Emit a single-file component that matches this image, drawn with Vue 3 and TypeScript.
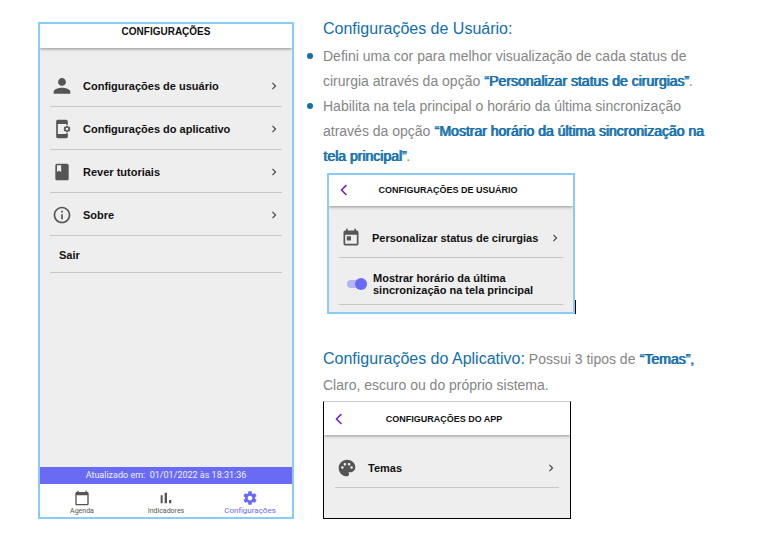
<script setup lang="ts">
import { ref } from 'vue'

interface MenuItem {
  label: string
  icon: string
}

const icons: Record<string, string> = {
  person: 'M12 11.800c2.600 0 4.700-2.100 4.700-4.700S14.600 2.400 12 2.400 7.300 4.500 7.300 7.100s2.100 4.700 4.700 4.700zm0 2.200c-3.300 0-10 1.600-10 4.900V21.400h20v-2.500c0-3.300-6.700-4.900-10-4.900z',
  book: 'M18 2H6c-1.100 0-2 .9-2 2v16c0 1.100.9 2 2 2h12c1.100 0 2-.9 2-2V4c0-1.100-.9-2-2-2zM6 4h5v8l-2.500-1.500L6 12V4z',
  info: 'M11 7h2v2h-2zm0 4h2v6h-2zm1-9C6.480 2 2 6.480 2 12s4.480 10 10 10 10-4.480 10-10S17.520 2 12 2zm0 18c-4.410 0-8-3.590-8-8s3.590-8 8-8 8 3.590 8 8-3.590 8-8 8z',
  today: 'M19 3h-1V1h-2v2H8V1H6v2H5c-1.110 0-2 .9-2 2v14c0 1.100.89 2 2 2h14c1.100 0 2-.9 2-2V5c0-1.100-.9-2-2-2zm0 16H5V8h14v11zM7 10h5v5H7z',
  calendar: 'M20 3h-1V1h-2v2H7V1H5v2H4c-1.100 0-2 .9-2 2v16c0 1.100.9 2 2 2h16c1.100 0 2-.9 2-2V5c0-1.100-.9-2-2-2zm0 18H4V8h16v13z',
  palette: 'M12 2C6.490 2 2 6.490 2 12s4.490 10 10 10c1.380 0 2.500-1.120 2.500-2.500 0-.61-.23-1.200-.64-1.670-.08-.1-.13-.21-.13-.33 0-.28.22-.5.5-.5H16c3.310 0 6-2.690 6-6 0-4.960-4.490-9-10-9zM6.500 13c-.83 0-1.500-.67-1.500-1.500S5.670 10 6.500 10 8 10.670 8 11.500 7.330 13 6.500 13zm3-4C8.670 9 8 8.330 8 7.500S8.670 6 9.500 6s1.500.67 1.500 1.500S10.330 9 9.500 9zm5 0c-.83 0-1.500-.67-1.500-1.500S13.670 6 14.500 6s1.500.67 1.500 1.500S15.330 9 14.500 9zm3 4c-.83 0-1.500-.67-1.500-1.500s.67-1.500 1.500-1.500 1.500.67 1.500 1.500-.67 1.500-1.500 1.500z',
  phone: 'M21.810 12.740l-.82-.63v-.22l.8-.63c.16-.12.2-.34.1-.51l-.85-1.480c-.07-.13-.21-.2-.35-.2-.05 0-.1.01-.15.03l-.95.38c-.08-.05-.11-.07-.19-.11l-.15-1.010c-.03-.21-.2-.36-.4-.36h-1.710c-.2 0-.37.15-.4.34l-.14 1.010c-.03.02-.07.03-.1.05l-.09.06-.95-.38c-.05-.02-.1-.03-.15-.03-.14 0-.27.07-.35.2l-.85 1.480c-.1.17-.06.39.1.51l.8.63v.23l-.8.63c-.16.12-.2.34-.1.51l.85 1.480c.07.13.21.2.35.2.05 0 .1-.01.15-.03l.95-.37c.08.05.12.07.2.11l.15 1.010c.03.2.2.34.4.34h1.710c.2 0 .37-.15.4-.34l.15-1.010c.03-.02.07-.03.1-.05l.09-.06.95.38c.05.02.1.03.15.03.14 0 .27-.07.35-.2l.85-1.480c.1-.17.06-.39-.1-.51zM18 13.500c-.83 0-1.500-.67-1.500-1.500s.67-1.500 1.500-1.500 1.500.67 1.500 1.500-.67 1.500-1.500 1.500zM17 18H7V6h10v1h2V3c0-1.100-.9-2-2-2H7c-1.100 0-2 .9-2 2v18c0 1.100.9 2 2 2h10c1.100 0 2-.9 2-2v-4h-2v1z',
  bars: 'M4 8h3v12H4zm12.500 7h3.500v5h-3.500zM10 4h3.500v16H10z',
  gear: 'M19.430 12.980c.04-.32.07-.64.07-.98s-.03-.66-.07-.98l2.110-1.650c.19-.15.24-.42.12-.64l-2-3.460c-.12-.22-.39-.3-.61-.22l-2.490 1c-.52-.4-1.080-.73-1.690-.98l-.38-2.650C14.460 2.180 14.250 2 14 2h-4c-.25 0-.46.18-.49.42l-.38 2.650c-.61.25-1.170.59-1.690.98l-2.490-1c-.23-.09-.49 0-.61.22l-2 3.460c-.13.22-.07.49.12.64l2.110 1.650c-.04.32-.07.65-.07.98s.03.66.07.98l-2.110 1.650c-.19.15-.24.42-.12.64l2 3.460c.12.22.39.3.61.22l2.490-1c.52.4 1.080.73 1.690.98l.38 2.650c.03.24.24.42.49.42h4c.25 0 .46-.18.49-.42l.38-2.650c.61-.25 1.170-.59 1.690-.98l2.490 1c.23.09.49 0 .61-.22l2-3.460c.12-.22.07-.49-.12-.64l-2.110-1.650zM12 15.500c-1.930 0-3.500-1.570-3.500-3.500s1.570-3.500 3.500-3.500 3.500 1.570 3.500 3.500-1.570 3.500-3.500 3.500z',
  chevron: 'M8.600 7.400L10 6l6 6-6 6-1.400-1.400L13.200 12z',
  back: 'M17 4.500L15.200 2.700 5.900 12l9.300 9.300 1.800-1.800L9.500 12z'
}

const menu: MenuItem[] = [
  { label: 'Configurações de usuário', icon: 'person' },
  { label: 'Configurações do aplicativo', icon: 'phone' },
  { label: 'Rever tutoriais', icon: 'book' },
  { label: 'Sobre', icon: 'info' }
]

const tabs: MenuItem[] = [
  { label: 'Agenda', icon: 'calendar' },
  { label: 'Indicadores', icon: 'bars' },
  { label: 'Configurações', icon: 'gear' }
]

const activeTab = ref('Configurações')
const showSync = ref(true)
</script>

<template>
  <main class="page">
    <section class="screen phone">
      <header class="bar">
        <h1 class="bar-title">CONFIGURAÇÕES</h1>
      </header>
      <nav class="list">
        <button v-for="item in menu" :key="item.label" type="button" class="row">
          <svg class="icon" viewBox="0 0 24 24"><path fill-rule="evenodd" :d="icons[item.icon]" /></svg>
          <span class="label">{{ item.label }}</span>
          <svg class="chevron" viewBox="0 0 24 24"><path :d="icons.chevron" /></svg>
        </button>
        <button type="button" class="row exit">Sair</button>
      </nav>
      <p class="updated">Atualizado em:&nbsp; 01/01/2022 às 18:31:36</p>
      <nav class="tabs">
        <button
          v-for="tab in tabs"
          :key="tab.label"
          type="button"
          class="tab"
          :class="{ active: tab.label === activeTab }"
          @click="activeTab = tab.label"
        >
          <svg class="tab-icon" viewBox="0 0 24 24"><path fill-rule="evenodd" :d="icons[tab.icon]" /></svg>
          <span>{{ tab.label }}</span>
        </button>
      </nav>
    </section>

    <article class="doc">
      <h2 class="heading">Configurações de Usuário:</h2>
      <ul class="points">
        <li>
          Defini uma cor para melhor visualização de cada status de cirurgia através da opção
          <strong>“Personalizar status de cirurgias”</strong>.
        </li>
        <li>
          Habilita na tela principal o horário da última sincronização através da opção
          <strong>“Mostrar horário da última sincronização na tela principal”</strong>.
        </li>
      </ul>

      <div class="figure">
        <section class="screen card user">
          <header class="bar">
            <button type="button" class="back" aria-label="Voltar">
              <svg viewBox="0 0 24 24"><path :d="icons.back" /></svg>
            </button>
            <h3 class="bar-title">CONFIGURAÇÕES DE USUÁRIO</h3>
          </header>
          <div class="list">
            <button type="button" class="row">
              <svg class="icon" viewBox="0 0 24 24"><path fill-rule="evenodd" :d="icons.today" /></svg>
              <span class="label">Personalizar status de cirurgias</span>
              <svg class="chevron" viewBox="0 0 24 24"><path :d="icons.chevron" /></svg>
            </button>
            <label class="row toggle" for="sync">
              <input id="sync" v-model="showSync" type="checkbox" class="switch" />
              <span>Mostrar horário da última sincronização na tela principal</span>
            </label>
          </div>
        </section>
        <span class="caret"></span>
      </div>

      <div class="intro">
        <h2 class="heading">Configurações do Aplicativo:</h2>
        {{ ' ' }}
        <p>Possui 3 tipos de <strong>“Temas”,</strong> Claro, escuro ou do próprio sistema.</p>
      </div>

      <section class="screen card app">
        <header class="bar">
          <button type="button" class="back" aria-label="Voltar">
            <svg viewBox="0 0 24 24"><path :d="icons.back" /></svg>
          </button>
          <h3 class="bar-title">CONFIGURAÇÕES DO APP</h3>
        </header>
        <div class="list">
          <button type="button" class="row">
            <svg class="icon" viewBox="0 0 24 24"><path fill-rule="evenodd" :d="icons.palette" /></svg>
            <span class="label">Temas</span>
            <svg class="chevron" viewBox="0 0 24 24"><path :d="icons.chevron" /></svg>
          </button>
        </div>
      </section>
    </article>
  </main>
</template>

<style>
body {
  margin: 0;
  background: #fff;
}
</style>

<style scoped>
.page {
  display: grid;
  grid-template-columns: minmax(0, 256fr) minmax(0, 400fr);
  gap: 29px;
  padding: 16px 50px 20px 38px;
  font-family: "Liberation Sans", Arial, sans-serif;
}

h1, h2, h3, p, ul {
  margin: 0;
  padding: 0;
}

button {
  margin: 0;
  padding: 0;
  border: 0;
  background: none;
  font: inherit;
  color: inherit;
  cursor: pointer;
}

svg {
  display: block;
  flex: none;
  fill: currentColor;
}

.screen {
  display: flex;
  flex-direction: column;
  box-sizing: border-box;
  overflow: hidden;
  border: 2px solid #8accf9;
  background: #eee;
  color: #111;
}

.phone {
  margin-top: 6px;
}

.bar {
  display: flex;
  align-items: center;
  background: #fff;
  box-shadow: 0 1px 3px rgba(0, 0, 0, 0.4);
}

.bar-title {
  flex: 1;
  font-size: 10px;
  line-height: 14px;
  font-weight: 700;
  text-align: center;
}

.phone .bar {
  padding: 1px 0 9px;
}

.list {
  flex: 1;
  padding: 16px 10px 0;
}

.row {
  display: flex;
  align-items: center;
  box-sizing: border-box;
  width: 100%;
  min-height: 43px;
  padding: 2px 1px 0 2px;
  border-bottom: 1px solid #c6c6c6;
  font-size: 11px;
  line-height: 12px;
  font-weight: 700;
  text-align: left;
}

.icon {
  width: 20px;
  height: 20px;
  margin-right: 11px;
  color: #555;
}

.label {
  flex: 1;
}

.chevron {
  width: 14px;
  height: 14px;
  color: #444;
}

.exit {
  min-height: 37px;
  padding-left: 9px;
}

.updated {
  background: #6a6bf5;
  color: #f0f0ff;
  font-family: Roboto, sans-serif;
  font-size: 9px;
  line-height: 17px;
  text-align: center;
}

.tabs {
  display: grid;
  grid-template-columns: repeat(3, 1fr);
  background: #fff;
}

.tab {
  display: flex;
  flex-direction: column;
  align-items: center;
  padding: 6px 0 1px;
  font-family: Roboto, sans-serif;
  font-size: 7px;
  line-height: 10px;
  color: #555;
}

.tab.active {
  font-size: 8px;
  color: #6a6bf5;
}

.tab-icon {
  width: 16px;
  height: 16px;
}

.doc {
  font-size: 14px;
  line-height: 25px;
  color: #858585;
}

.heading {
  font-size: 16px;
  line-height: 25px;
  font-weight: 400;
  color: #126fab;
}

.points {
  margin-top: 3px;
  list-style: none;
}

.points li::before {
  content: "";
  float: left;
  width: 6px;
  height: 6px;
  margin: 9px 0 0 -16px;
  border-radius: 50%;
  background: #126fab;
}

strong {
  font-weight: 400;
  color: #126fab;
  text-shadow: 1px 0 currentColor;
}

.figure {
  display: flex;
  align-items: flex-end;
  margin: 4px 0 32px 4px;
}

.card {
  width: 248px;
}

.card .bar {
  padding: 8px 28px 9px 8px;
}

.card .bar-title {
  font-size: 9px;
}

.card .list {
  padding: 13px 10px 7px;
}

.card .row {
  padding-top: 0;
}

.back svg {
  width: 14px;
  height: 14px;
  color: #7418d8;
}

.user .row {
  min-height: 39px;
}

.card .toggle {
  min-height: 47px;
  padding: 6px 20px 0 8px;
  cursor: pointer;
}

.switch {
  appearance: none;
  display: flex;
  align-items: center;
  flex: none;
  width: 20px;
  height: 8px;
  margin: 0 6px 0 0;
  border-radius: 4px;
  background: #b4b5f3;
  cursor: pointer;
}

.switch::before {
  content: "";
  width: 12px;
  height: 12px;
  border-radius: 50%;
  background: #888;
}

.switch:checked {
  justify-content: flex-end;
}

.switch:checked::before {
  background: #6a6bf5;
}

.caret {
  width: 1px;
  height: 14px;
  background: #000;
}

.intro {
  margin-bottom: 3px;
  line-height: 26px;
}

.intro .heading,
.intro p {
  display: inline;
  line-height: 26px;
}

.app {
  border: 1px solid #000;
  border-top-color: #ccc;
}

.card.app .bar {
  padding: 10px 28px 9px 8px;
}

.card.app .list {
  padding: 13px 11px 30px;
}

.app .row {
  min-height: 40px;
}
</style>
